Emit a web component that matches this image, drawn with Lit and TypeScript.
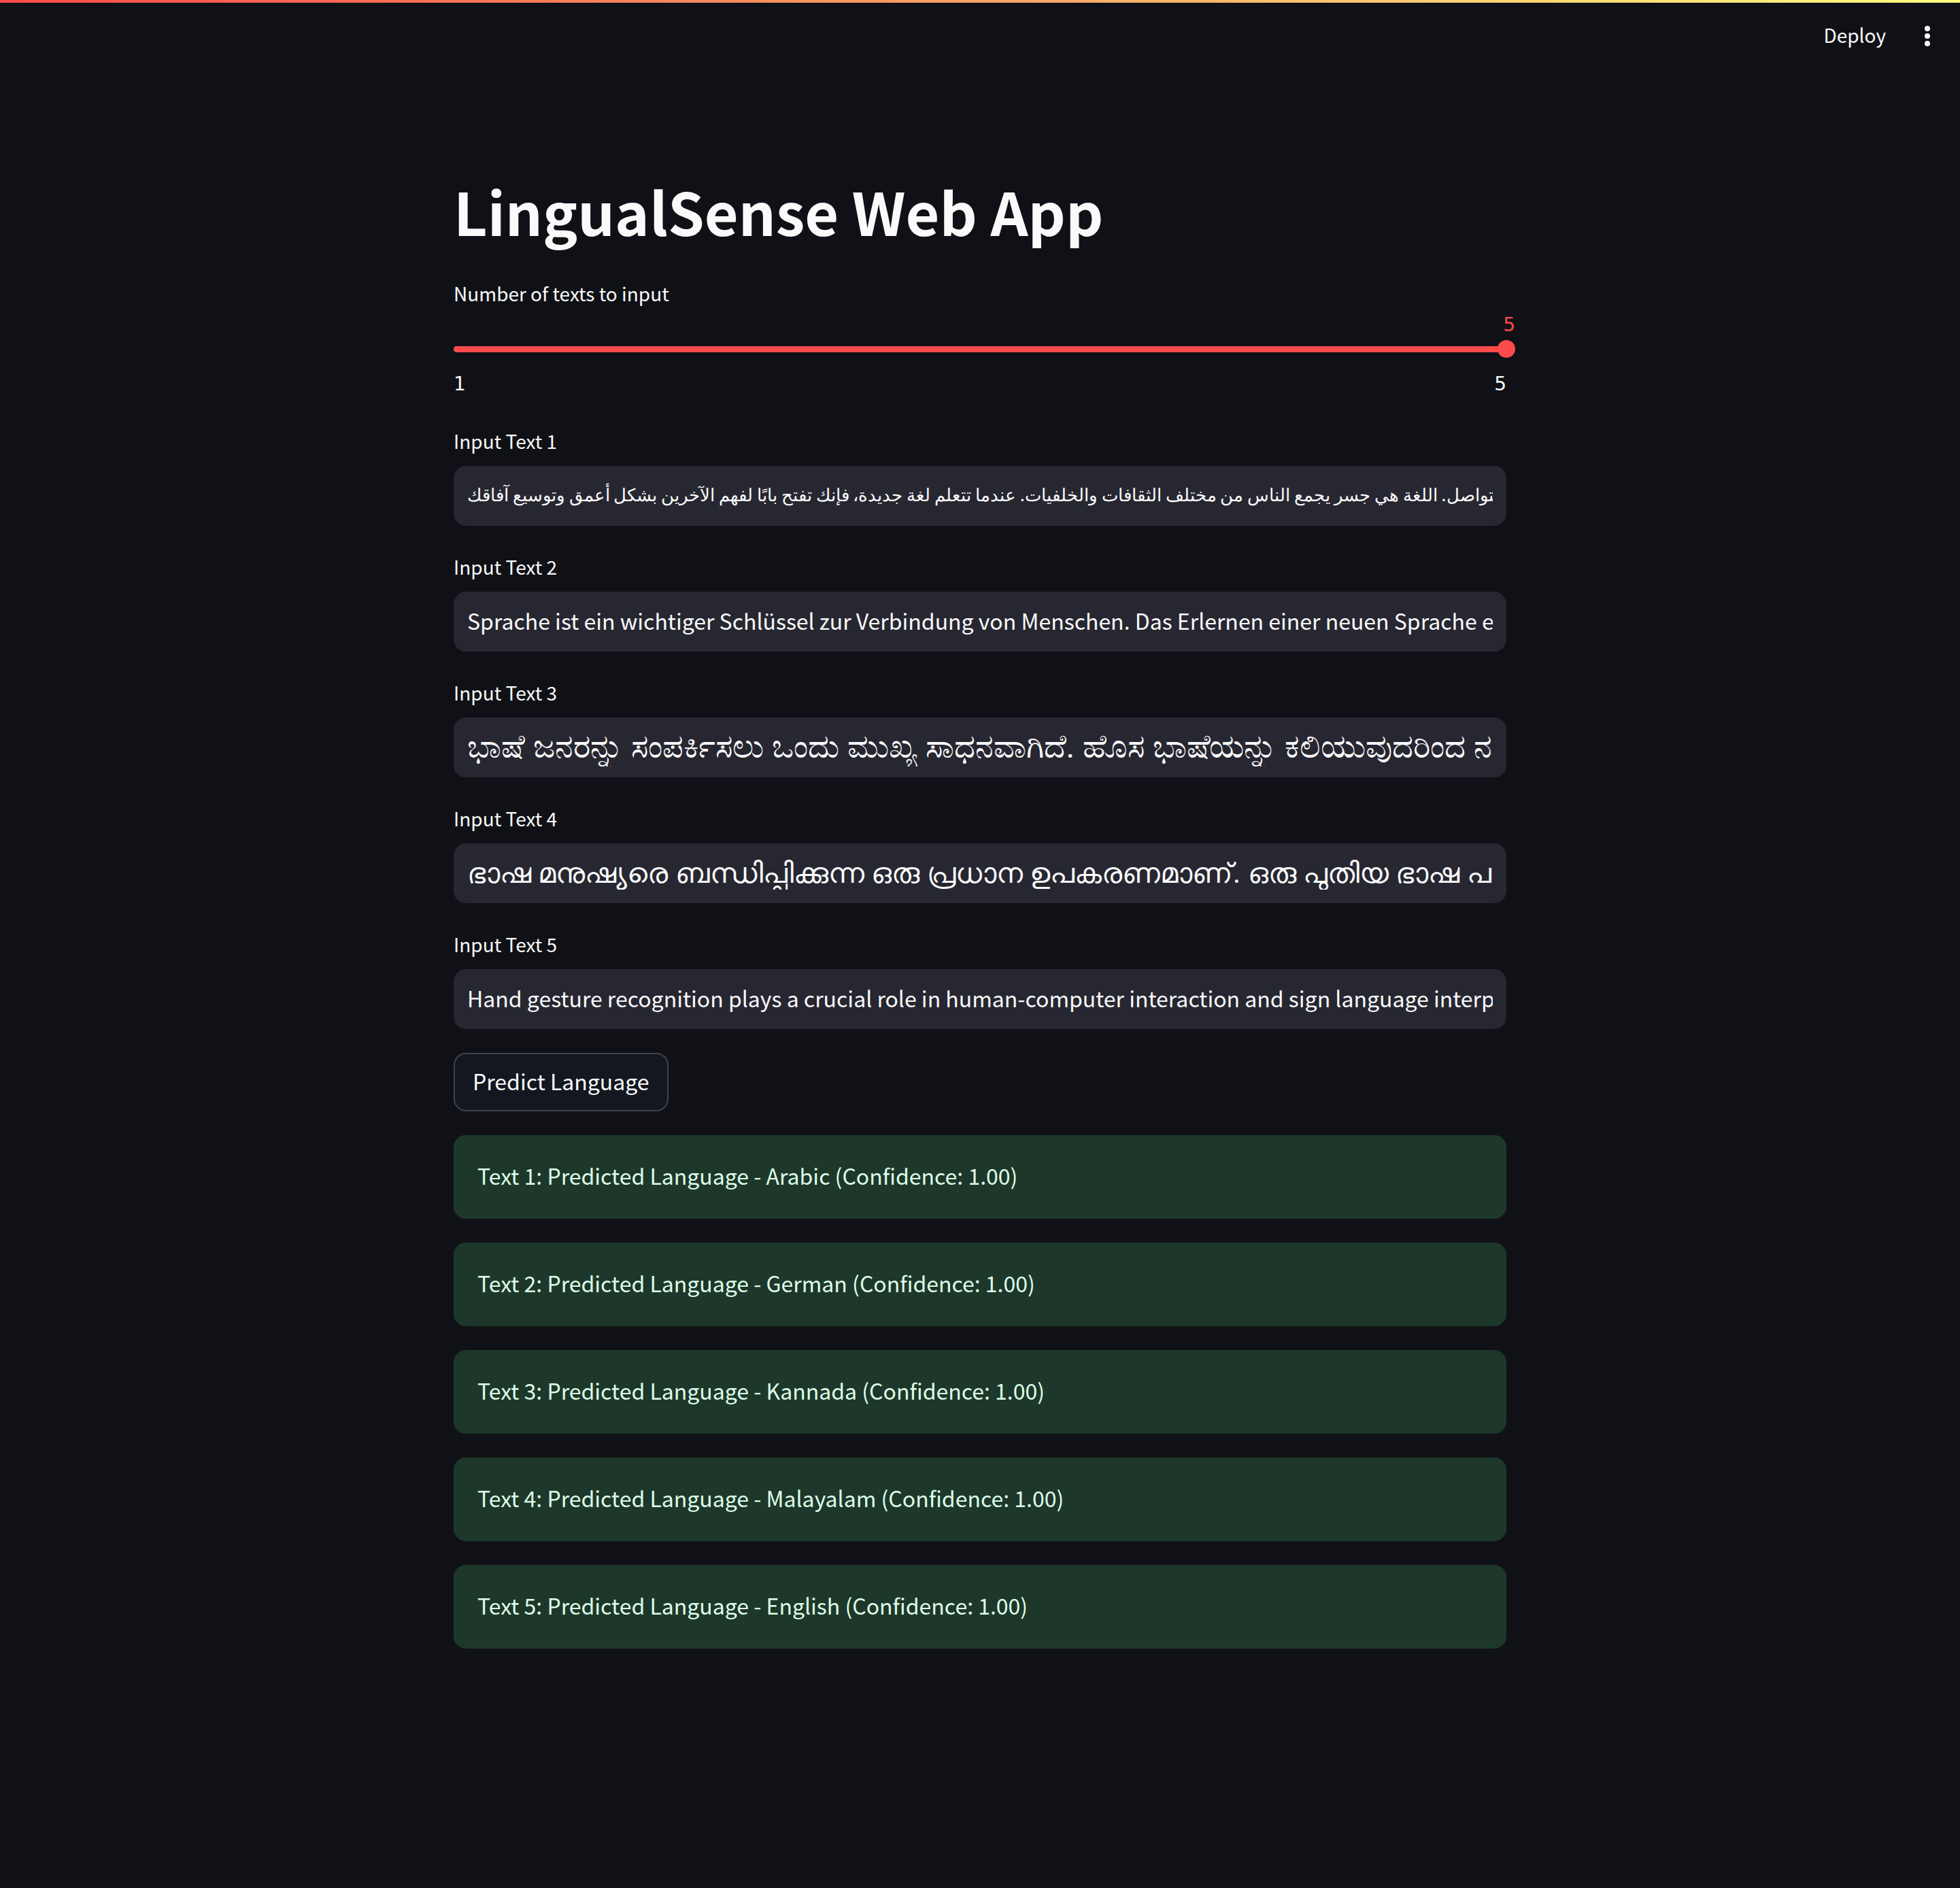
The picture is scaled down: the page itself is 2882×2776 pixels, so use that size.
import { LitElement, html, css } from "lit";
import { customElement, state } from "lit/decorators.js";

interface Entry {
  text: string;
  lang: string;
  language: string;
}

const ENTRIES: Entry[] = [
  {
    text: "تعلم اللغات هو مفتاح التواصل. اللغة هي جسر يجمع الناس من مختلف الثقافات والخلفيات. عندما تتعلم لغة جديدة، فإنك تفتح بابًا لفهم الآخرين بشكل أعمق وتوسيع آفاقك",
    lang: "ar",
    language: "Arabic",
  },
  {
    text: "Sprache ist ein wichtiger Schlüssel zur Verbindung von Menschen. Das Erlernen einer neuen Sprache eröffnet neue Möglichkeiten.",
    lang: "de",
    language: "German",
  },
  {
    text: "ಭಾಷೆ ಜನರನ್ನು ಸಂಪರ್ಕಿಸಲು ಒಂದು ಮುಖ್ಯ ಸಾಧನವಾಗಿದೆ. ಹೊಸ ಭಾಷೆಯನ್ನು ಕಲಿಯುವುದರಿಂದ ನಮ್ಮ ಜ್ಞಾನ ಹೆಚ್ಚುತ್ತದೆ.",
    lang: "kn",
    language: "Kannada",
  },
  {
    text: "ഭാഷ മനുഷ്യരെ ബന്ധിപ്പിക്കുന്ന ഒരു പ്രധാന ഉപകരണമാണ്. ഒരു പുതിയ ഭാഷ പഠിക്കുന്നത് പുതിയ അവസരങ്ങൾ നൽകുന്നു.",
    lang: "ml",
    language: "Malayalam",
  },
  {
    text: "Hand gesture recognition plays a crucial role in human-computer interaction and sign language interpretation.",
    lang: "en",
    language: "English",
  },
];

const MIN = 1;
const MAX = ENTRIES.length;

@customElement("app-root")
export class AppRoot extends LitElement {
  static styles = css`
    :host {
      display: block;
      min-height: 100vh;
      background: #101116;
      color: #fafafa;
      font-family: "Noto Sans CJK SC", "Noto Sans", sans-serif;
      font-size: 32px;
      --small: 28px;
      --gap: 35px;
      --radius: 18px;
      --accent: #ff4b4b;
    }
    * {
      box-sizing: border-box;
    }
    button,
    input {
      font: inherit;
      color: inherit;
      margin: 0;
    }
    .decoration {
      height: 4px;
      background: linear-gradient(90deg, #ff4b4b, #fffd80);
    }
    .toolbar {
      display: flex;
      align-items: center;
      justify-content: flex-end;
      gap: 41px;
      height: 98px;
      padding: 0 28px;
    }
    .plain {
      display: flex;
      border: 0;
      background: none;
      padding: 0 0 4px;
      font-size: var(--small);
      line-height: 40px;
    }
    .menu {
      padding: 0;
    }
    .menu svg {
      width: 40px;
      height: 40px;
      fill: currentColor;
    }
    main {
      display: flex;
      flex-direction: column;
      gap: var(--gap);
      max-width: 1620px;
      margin: 0 auto;
      padding: 147px 36px 160px;
    }
    h1 {
      margin: 0;
      font-size: 86px;
      line-height: 122px;
      font-weight: 700;
    }
    .label {
      display: block;
      font-size: var(--small);
      line-height: 50px;
    }
    .slider {
      padding-bottom: 1px;
    }
    .value,
    .ticks {
      display: flex;
      font-family: "DejaVu Sans", sans-serif;
      font-size: var(--small);
      line-height: 44px;
    }
    .value {
      justify-content: flex-end;
      color: var(--accent);
    }
    .value output {
      margin-right: -13px;
    }
    .ticks {
      justify-content: space-between;
    }
    .rail {
      display: grid;
      align-items: center;
      margin-bottom: 17px;
    }
    .rail > * {
      grid-area: 1 / 1;
    }
    .track {
      height: 9px;
      border-radius: 5px;
      background: #31333f;
    }
    .fill {
      height: 100%;
      border-radius: inherit;
      background: var(--accent);
    }
    .range {
      appearance: none;
      width: calc(100% + 26px);
      height: 26px;
      margin: 0 -13px;
      background: none;
    }
    .range::-webkit-slider-thumb {
      appearance: none;
      width: 26px;
      height: 26px;
      border-radius: 50%;
      background: var(--accent);
    }
    .field .label {
      margin-bottom: 12px;
    }
    .text {
      display: block;
      width: 100%;
      height: 88px;
      padding: 0 18px 4px;
      border: 2px solid #272731;
      border-radius: var(--radius);
      background: #272731;
      outline: none;
    }
    .ar {
      padding-bottom: 8px;
      font-size: 26px;
    }
    .kn,
    .ml {
      padding-bottom: 2px;
      font-family: Roboto, "Noto Sans", sans-serif;
      line-height: 82px;
    }
    .kn {
      font-size: 48px;
    }
    .ml {
      font-size: 42px;
    }
    .submit {
      align-self: flex-start;
      height: 86px;
      padding: 0 26px 4px;
      border: 2px solid #414247;
      border-radius: var(--radius);
      background: #131720;
    }
    .alert {
      padding: 35px 35px 40px;
      line-height: 48px;
      border-radius: var(--radius);
      background: #1d382a;
      color: #dffde9;
    }
  `;

  @state() private count = MAX;

  private onSlide(e: Event) {
    this.count = Number((e.target as HTMLInputElement).value);
  }

  render() {
    const fill = `width: ${((this.count - MIN) / (MAX - MIN)) * 100}%`;
    const entries = ENTRIES.slice(0, this.count);
    return html`
      <div class="decoration"></div>
      <header class="toolbar">
        <button class="plain" type="button">Deploy</button>
        <button class="plain menu" type="button" aria-label="Main menu">
          <svg viewBox="0 0 40 40" aria-hidden="true">
            <circle cx="20" cy="9" r="4" />
            <circle cx="20" cy="20" r="4" />
            <circle cx="20" cy="31" r="4" />
          </svg>
        </button>
      </header>
      <main>
        <h1>LingualSense Web App</h1>
        <div class="slider">
          <label class="label" for="count">Number of texts to input</label>
          <div class="value" style=${fill}><output for="count">${this.count}</output></div>
          <div class="rail">
            <div class="track"><div class="fill" style=${fill}></div></div>
            <input
              class="range"
              id="count"
              type="range"
              min=${MIN}
              max=${MAX}
              .value=${String(this.count)}
              @input=${this.onSlide}
            />
          </div>
          <div class="ticks"><span>${MIN}</span><span>${MAX}</span></div>
        </div>
        ${entries.map(
          (entry, i) => html`
            <div class="field">
              <label class="label" for="text-${i}">Input Text ${i + 1}</label>
              <input class="text ${entry.lang}" id="text-${i}" type="text" dir="ltr" lang=${entry.lang} .value=${entry.text} />
            </div>
          `
        )}
        <button class="submit" type="button">Predict Language</button>
        ${entries.map(
          (entry, i) => html`
            <div class="alert" role="alert">
              Text ${i + 1}: Predicted Language - ${entry.language} (Confidence: 1.00)
            </div>
          `
        )}
      </main>
    `;
  }
}
